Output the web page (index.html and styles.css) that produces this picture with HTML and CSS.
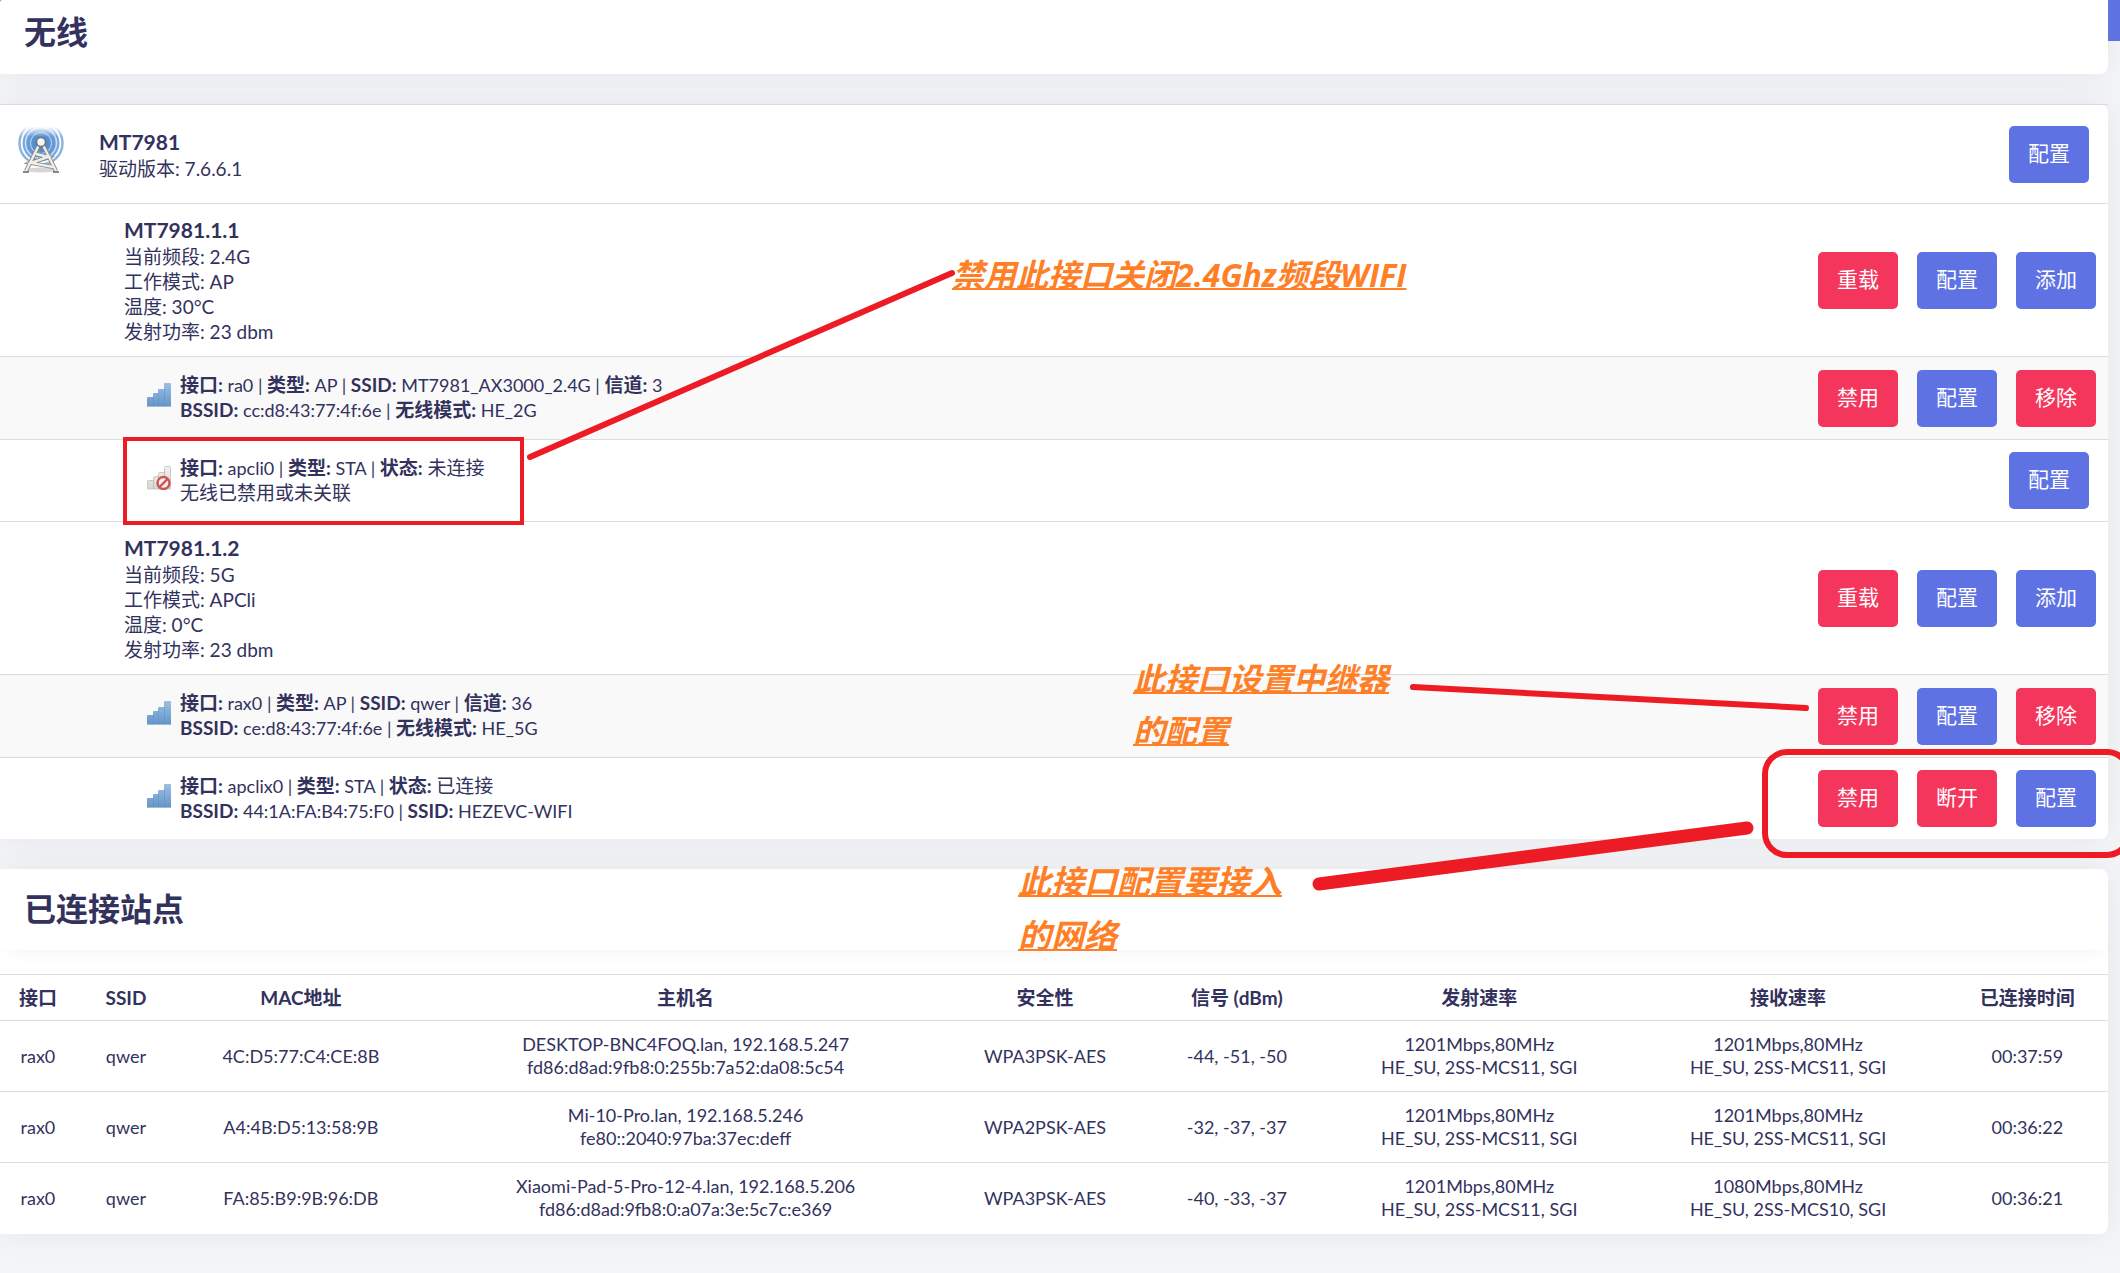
FILE: index.html
```html
<!DOCTYPE html>
<html lang="zh-CN">
<head>
<meta charset="utf-8">
<title>无线</title>
<link rel="stylesheet" href="styles.css">
</head>
<body>
<svg class="defs" width="0" height="0" aria-hidden="true">
  <defs>
    <linearGradient id="blueBar" x1="0" y1="0" x2="0" y2="1">
      <stop offset="0" stop-color="#9dc0e3"/><stop offset="1" stop-color="#6596cb"/>
    </linearGradient>
    <linearGradient id="greyBar" x1="0" y1="0" x2="0" y2="1">
      <stop offset="0" stop-color="#f1f1ee"/><stop offset="1" stop-color="#d6d7d3"/>
    </linearGradient>
    <radialGradient id="wave" cx="23" cy="17" r="20" gradientUnits="userSpaceOnUse">
      <stop offset="0" stop-color="#3f7fcb"/><stop offset="0.6" stop-color="#6298d6"/><stop offset="1" stop-color="#86b0e0"/>
    </radialGradient>
    <linearGradient id="fade" x1="0" y1="0" x2="0" y2="1">
      <stop offset="0" stop-color="#fff" stop-opacity="0.95"/><stop offset="0.4" stop-color="#fff" stop-opacity="0"/>
    </linearGradient>
    <symbol id="signal" viewBox="0 0 24 24">
      <path d="M0 23V15q0-1 1-1h5v-3q0-1 1-1h4V7q0-1 1-1h5V1q0-1 1-1h5q1 0 1 1v22z" fill="url(#blueBar)"/>
      <path d="M6.500 14v9M11.500 10v13M17.500 6v17" stroke="#5c8fc6" stroke-width="1" opacity="0.500"/>
      <path d="M0 23.500h24" stroke="#a9b9c9"/>
    </symbol>
    <symbol id="signal-off" viewBox="0 0 24 24">
      <path d="M.5 23V15.500q0-1 1-1h5v-3q0-1 1-1h4V7.500q0-1 1-1h5v-5q0-1 1-1h4q1 0 1 1V23z" fill="url(#greyBar)" stroke="#c9cac6"/>
      <path d="M6.500 14v9M11.500 10v13M17.500 6v17" stroke="#bfc0bc"/>
      <circle cx="16.500" cy="17" r="6" fill="#fff" fill-opacity="0.600" stroke="#d05252" stroke-width="2.400"/>
      <path d="M12.500 21l8-8" stroke="#d05252" stroke-width="2.400"/>
    </symbol>
  </defs>
</svg>

<main class="page">
  <header class="card title-card"><h1 class="title">无线</h1></header>

  <section class="card devices">
    <div class="row row-chip">
      <svg class="tower" viewBox="0 0 46 46" aria-hidden="true">
        <circle cx="23" cy="16" r="21.500" fill="none" stroke="#8fb5df" stroke-width="2.500"/>
        <circle cx="23" cy="16" r="18.500" fill="url(#wave)"/>
        <circle cx="23" cy="16" r="15.500" fill="none" stroke="#cfe0f4" stroke-width="1.500"/>
        <circle cx="23" cy="16" r="10.500" fill="none" stroke="#a8c8ea" stroke-width="1.200"/>
        <rect width="46" height="24" fill="url(#fade)"/>
        <ellipse cx="23" cy="43" rx="16" ry="2.500" fill="#8a8a86" opacity="0.350"/>
        <path d="M20.500 19L8 44M25.500 19L38 44M18 27l12 3-17 6 22 4" fill="none" stroke="#85867f" stroke-width="4"/>
        <path d="M20.500 19L8 44M25.500 19L38 44M18 27l12 3-17 6 22 4" fill="none" stroke="#eeeeec" stroke-width="2.400"/>
        <path d="M5 45h6M35 45h6" stroke="#85867f" stroke-width="2"/>
        <circle cx="23" cy="15" r="4.500" fill="#f7f7f5" stroke="#77776f" stroke-width="1.600"/>
      </svg>
      <div class="info"><h2 class="name">MT7981</h2>驱动版本: 7.6.6.1</div>
      <div class="actions actions-single"><button class="btn">配置</button></div>
    </div>
    <div class="row row-radio">
      <div class="info"><h2 class="name">MT7981.1.1</h2>当前频段: 2.4G<br>工作模式: AP<br>温度: 30°C<br>发射功率: 23 dbm</div>
      <div class="actions"><button class="btn btn-red">重载</button><button class="btn">配置</button><button class="btn">添加</button></div>
    </div>
    <div class="row row-iface shaded">
      <svg class="sig" aria-hidden="true"><use href="#signal"/></svg>
      <div class="details"><b>接口:</b> ra0 | <b>类型:</b> AP | <b>SSID:</b> MT7981_AX3000_2.4G | <b>信道:</b> 3<br><b>BSSID:</b> cc:d8:43:77:4f:6e | <b>无线模式:</b> HE_2G</div>
      <div class="actions"><button class="btn btn-red">禁用</button><button class="btn">配置</button><button class="btn btn-red">移除</button></div>
    </div>
    <div class="row row-iface row-client">
      <svg class="sig" aria-hidden="true"><use href="#signal-off"/></svg>
      <div class="details"><b>接口:</b> apcli0 | <b>类型:</b> STA | <b>状态:</b> <span class="state">未连接</span><br><span class="state">无线已禁用或未关联</span></div>
      <div class="actions actions-single"><button class="btn">配置</button></div>
    </div>
    <div class="row row-radio">
      <div class="info"><h2 class="name">MT7981.1.2</h2>当前频段: 5G<br>工作模式: APCli<br>温度: 0°C<br>发射功率: 23 dbm</div>
      <div class="actions"><button class="btn btn-red">重载</button><button class="btn">配置</button><button class="btn">添加</button></div>
    </div>
    <div class="row row-iface shaded">
      <svg class="sig" aria-hidden="true"><use href="#signal"/></svg>
      <div class="details"><b>接口:</b> rax0 | <b>类型:</b> AP | <b>SSID:</b> qwer | <b>信道:</b> 36<br><b>BSSID:</b> ce:d8:43:77:4f:6e | <b>无线模式:</b> HE_5G</div>
      <div class="actions"><button class="btn btn-red">禁用</button><button class="btn">配置</button><button class="btn btn-red">移除</button></div>
    </div>
    <div class="row row-iface row-client">
      <svg class="sig" aria-hidden="true"><use href="#signal"/></svg>
      <div class="details"><b>接口:</b> apclix0 | <b>类型:</b> STA | <b>状态:</b> <span class="state">已连接</span><br><b>BSSID:</b> 44:1A:FA:B4:75:F0 | <b>SSID:</b> HEZEVC-WIFI</div>
      <div class="actions"><button class="btn btn-red">禁用</button><button class="btn btn-red">断开</button><button class="btn">配置</button></div>
    </div>
  </section>

  <section class="card stations">
    <div class="stations-head"><h2 class="title">已连接站点</h2></div>
    <table class="table">
      <colgroup><col class="c-if"><col class="c-ssid"><col class="c-mac"><col class="c-host"><col class="c-sec"><col class="c-sig"><col class="c-tx"><col class="c-rx"><col class="c-time"></colgroup>
      <thead><tr><th>接口</th><th>SSID</th><th>MAC地址</th><th>主机名</th><th>安全性</th><th>信号 (dBm)</th><th>发射速率</th><th>接收速率</th><th>已连接时间</th></tr></thead>
      <tbody>
        <tr><td>rax0</td><td>qwer</td><td>4C:D5:77:C4:CE:8B</td><td>DESKTOP-BNC4FOQ.lan, 192.168.5.247<br>fd86:d8ad:9fb8:0:255b:7a52:da08:5c54</td><td>WPA3PSK-AES</td><td>-44, -51, -50</td><td>1201Mbps,80MHz<br>HE_SU, 2SS-MCS11, SGI</td><td>1201Mbps,80MHz<br>HE_SU, 2SS-MCS11, SGI</td><td>00:37:59</td></tr>
        <tr><td>rax0</td><td>qwer</td><td>A4:4B:D5:13:58:9B</td><td>Mi-10-Pro.lan, 192.168.5.246<br>fe80::2040:97ba:37ec:deff</td><td>WPA2PSK-AES</td><td>-32, -37, -37</td><td>1201Mbps,80MHz<br>HE_SU, 2SS-MCS11, SGI</td><td>1201Mbps,80MHz<br>HE_SU, 2SS-MCS11, SGI</td><td>00:36:22</td></tr>
        <tr><td>rax0</td><td>qwer</td><td>FA:85:B9:9B:96:DB</td><td>Xiaomi-Pad-5-Pro-12-4.lan, 192.168.5.206<br>fd86:d8ad:9fb8:0:a07a:3e:5c7c:e369</td><td>WPA3PSK-AES</td><td>-40, -33, -37</td><td>1201Mbps,80MHz<br>HE_SU, 2SS-MCS11, SGI</td><td>1080Mbps,80MHz<br>HE_SU, 2SS-MCS10, SGI</td><td>00:36:21</td></tr>
      </tbody>
    </table>
  </section>

  <div class="notes">
    <svg class="marks" aria-hidden="true" fill="none" stroke="#ed1c24" stroke-linecap="round">
      <rect x="125" y="439" width="397" height="84" stroke-width="4"/>
      <path d="M530 457L952 273" stroke-width="6"/>
      <path d="M1413 687L1806 708" stroke-width="6"/>
      <path d="M1319 884L1747 828" stroke-width="13"/>
      <rect x="1765" y="752" width="364" height="103" rx="22" stroke-width="6"/>
    </svg>
    <p class="note note-a">禁用此接口关闭2.4Ghz频段WIFI</p>
    <p class="note note-b">此接口设置中继器<br>的配置</p>
    <p class="note note-c">此接口配置要接入<br>的网络</p>
  </div>
</main>
</body>
</html>
```
FILE: styles.css
```css
* { box-sizing: border-box; }

body {
  margin: 0;
  background: #f4f5f7 linear-gradient(#5e72e4, #5e72e4) no-repeat 0 0 / 100% 41px;
  color: #32325d;
  font: 18px/25px Lato, "Noto Sans CJK SC", sans-serif;
}

.defs { position: absolute; }

.page {
  position: relative;
  min-height: 100vh;
  padding: 0 12px 40px 0;
  overflow: hidden;
}

.card {
  background: #fff;
  border-radius: 2px 8px 8px 2px;
  box-shadow: 0 0 32px rgba(136, 152, 170, 0.15);
}

.title-card {
  padding: 8px 24px 18px;
  border-top-right-radius: 0;
}

.title {
  margin: 0;
  font-size: 32px;
  line-height: 48px;
  font-weight: 700;
}

.devices { margin-top: 30px; }

.row {
  display: flex;
  align-items: center;
  border-top: 1px solid #dadcdf;
}

.row-chip { min-height: 99px; padding-left: 18px; }
.row-radio { min-height: 153px; padding-left: 124px; }
.row-iface { min-height: 83px; padding-left: 147px; }
.row-client { min-height: 82px; }
.shaded { background: #f9f9f9; }

.info { font-size: 19px; }

.details { line-height: 25px; }
.details b, .state { font-size: 19px; line-height: 24px; }

.name {
  margin: 0;
  font-size: 21px;
  line-height: 28px;
  font-weight: 700;
}

.tower { width: 46px; height: 46px; margin: 0 35px 8px 0; }
.sig { width: 24px; height: 24px; margin: 0 9px 6px 0; }

.actions {
  display: flex;
  gap: 19px;
  margin-left: auto;
  padding-right: 12px;
}

.actions-single { padding-right: 19px; }

.btn {
  width: 80px;
  height: 57px;
  padding: 0 0 4px;
  border: 0;
  border-radius: 5px;
  background: #5e72e4;
  color: #fff;
  font: inherit;
  font-size: 21px;
}

.btn-red { background: #f5365c; }

.stations { margin-top: 30px; }

.stations-head {
  margin-bottom: 24px;
  padding: 16px 24px 17px;
  border-radius: 2px 8px 8px 2px;
  box-shadow: 0 8px 16px -8px rgba(136, 152, 170, 0.12);
}

.table {
  width: 100%;
  border-collapse: collapse;
  table-layout: fixed;
  text-align: center;
  line-height: 23px;
}

.table th, .table td {
  padding: 0;
  border-top: 1px solid #dadcdf;
}

.table th { height: 46px; font-size: 19px; font-weight: 700; }
.table td { height: 71px; }

.c-if { width: 3.6%; }
.c-ssid { width: 4.75%; }
.c-mac { width: 11.85%; }
.c-host { width: 24.65%; }
.c-sec { width: 9.45%; }
.c-sig { width: 8.75%; }
.c-tx { width: 14.25%; }
.c-rx { width: 15.05%; }
.c-time { width: 7.65%; }

.notes {
  position: absolute;
  inset: 0;
  overflow: hidden;
  pointer-events: none;
}

.marks { position: absolute; width: 100%; height: 100%; overflow: visible; }

.note {
  position: absolute;
  margin: 0;
  color: #ff7f27;
  font: italic 700 32px/52px "Open Sans", "Noto Sans CJK SC", sans-serif;
  text-decoration: underline;
  text-decoration-thickness: 2px;
  white-space: nowrap;
}

.note-a { left: 952px; top: 249px; }
.note-b { left: 1133px; top: 653px; }
.note-c { left: 1018px; top: 855px; font-size: 33px; line-height: 54px; }
```
